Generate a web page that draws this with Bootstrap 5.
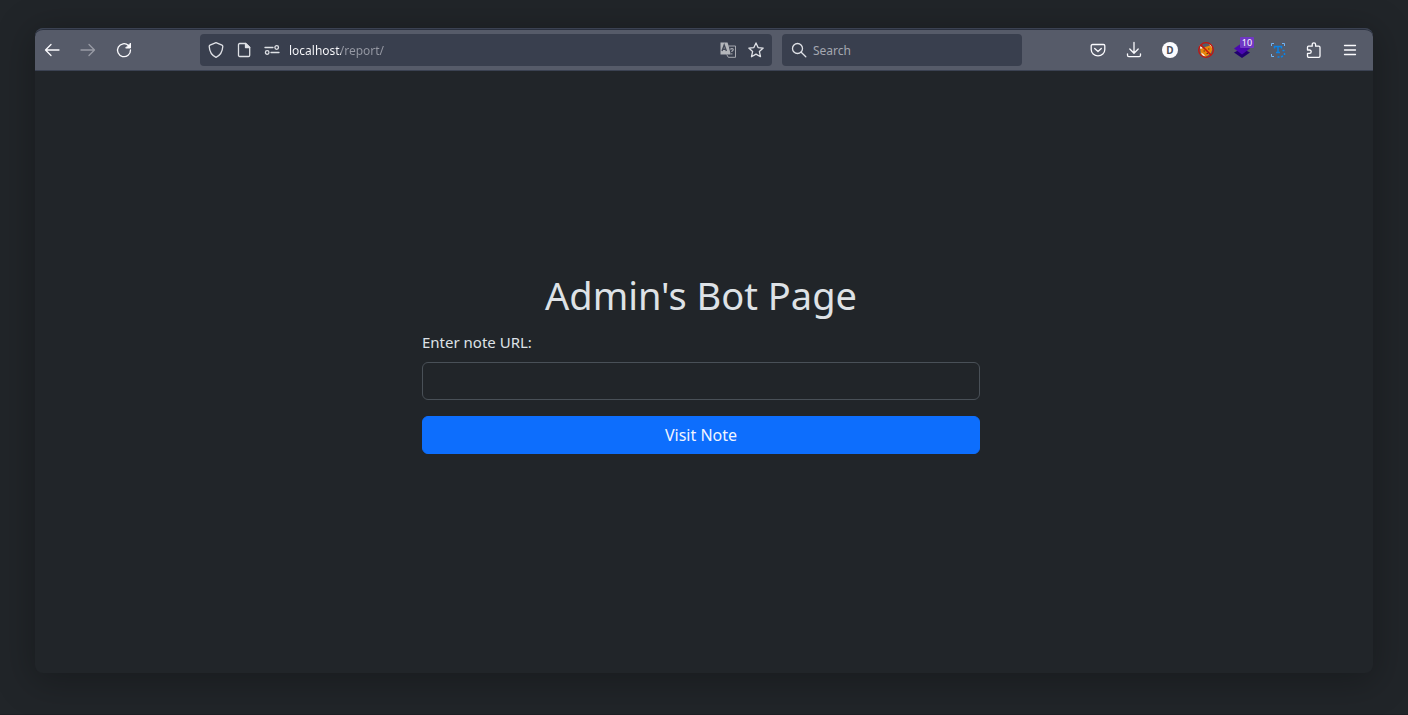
<!DOCTYPE html>
<html lang="en" data-bs-theme="dark">
<head>
<meta charset="utf-8">
<meta name="viewport" content="width=device-width, initial-scale=1">
<title>Admin's Bot Page</title>
<link href="https://cdn.jsdelivr.net/npm/bootstrap@5.3.0/dist/css/bootstrap.min.css" rel="stylesheet">
<style>
  body { font-family: "Noto Sans", sans-serif; background: #212529; color: #dee2e6; }
  .desktop { padding: 28px 35px 41px; border-bottom: 1px solid #1d1f24; }
  .window { background: #212529; border-radius: 8px; box-shadow: 0 6px 36px 4px rgba(0, 0, 0, .25); }
  .toolbar { height: 43px; gap: 2px; padding: 1px 6px 0 0; background: #565b69; color: #fbfbfe;
    border-top: 1px solid #3b4252; border-bottom: 1px solid #3b4252; border-radius: 8px 8px 0 0;
    box-shadow: inset 0 1px #2a303e; }
  .tool { width: 34px; height: 32px; padding: 0; border: 0; background: none; color: inherit;
    display: flex; align-items: center; justify-content: center; flex: none; }
  .tool:disabled { opacity: .4; }
  .tool svg { width: 16px; height: 16px; display: block; overflow: visible; }
  .line { fill: none; stroke: currentColor; stroke-width: 1.3; stroke-linecap: round; stroke-linejoin: round; }
  .spring { flex: 55 1 0; }
  .field { height: 32px; background: #393f4e; border-radius: 4px; color: #dfe1e6; }
  .field .tool { width: 28px; }
  .field input { min-width: 0; flex: 1; border: 0; padding: 2px 0 0; outline: 0; background: none; font-size: 12px; color: #fbfbfe; }
  .field input::placeholder { color: #a4a7b0; opacity: 1; }
  .address { flex: 568 1 0; padding: 0 2px; }
  .field .host-input { margin-left: 3px; background: linear-gradient(90deg, #fbfbfe 52px, #9699a4 52px);
    -webkit-background-clip: text; background-clip: text; -webkit-text-fill-color: transparent; }
  .finder { flex: 0 1 240px; margin-left: 8px; padding-left: 3px; }
  .count { position: absolute; top: 3px; right: 5px; width: 14px; height: 11px; background: #7038c4;
    border-radius: 1px; color: #fff; font-size: 9px; line-height: 11px; text-align: center; }
  .page-main { padding: 0 6px 0 0; }
  .note-form { width: 100%; max-width: 558px; padding-bottom: 16px; }
  .note-form h1 { font-size: 38px; font-weight: 400; line-height: 42px; margin-bottom: 14px; color: #dee2e6; }
  .note-form .form-label { font-size: 15px; line-height: 24px; }
  .form-control { background: #212529; border-color: #495057; }
  .btn-primary { color: #f1f5ff; }
</style>
</head>
<body>
<div class="desktop min-vh-100 d-flex">
  <div class="window flex-grow-1 d-flex flex-column">
    <header class="toolbar d-flex align-items-center">
      <button class="tool" type="button" aria-label="Back"><svg viewBox="0 0 16 16" class="line"><path d="M15 8H1.500M7 2.500 1.500 8 7 13.500"/></svg></button>
      <button class="tool" type="button" aria-label="Forward" disabled><svg viewBox="0 0 16 16" class="line"><path d="M1 8h13.500M9 2.500 14.500 8 9 13.500"/></svg></button>
      <button class="tool" type="button" aria-label="Reload"><svg viewBox="0 0 16 16" class="line"><path d="M12.500 3.500A6.500 6.500 0 1 0 14.500 8"/><path d="M14.500 1.500v4.500H10z" fill="currentColor" stroke-width="1"/></svg></button>
      <div class="spring"></div>
      <div class="field address d-flex align-items-center">
        <button class="tool" type="button" aria-label="Tracking protection"><svg viewBox="0 0 16 16" class="line"><path d="M8 .7 14 3.200c.6.3.8.7.8 1.200C14.500 9.500 12 13.500 8 15.300 4 13.500 1.500 9.500 1.200 4.400c0-.5.2-.9.8-1.200z"/></svg></button>
        <button class="tool" type="button" aria-label="Page information"><svg viewBox="0 0 16 16" class="line"><path d="M3.700 1.500h6l4 4v7.800c0 .7-.5 1.200-1.200 1.200H3.700c-.7 0-1.200-.5-1.200-1.200V2.700c0-.7.5-1.200 1.200-1.200z"/><path d="M9.500 1.500v4h4.200z" fill="currentColor"/></svg></button>
        <button class="tool" type="button" aria-label="Permissions"><svg viewBox="0 0 16 16" class="line"><path d="M1 5.500h8M7 10.500h8"/><circle cx="12.700" cy="5.500" r="1.800"/><circle cx="3.200" cy="10.500" r="1.800"/></svg></button>
        <input class="host-input" type="text" aria-label="Address" value="localhost/report/">
        <button class="tool" type="button" aria-label="Translate"><svg viewBox="0 0 16 16"><path d="M.5.500h7l1.200 3.500 2 8.500H.5z" fill="#b4b6bb"/><path d="M8.500 4h7v11.300H8.300l-1.600-2.800" fill="none" stroke="#a7a9b0"/><path d="m2 9 2.200-6 2.200 6M3 7.200h2.600" fill="none" stroke="#454a58" stroke-width="1.400"/><path d="M10.500 7.500c.4-1.300 3-1.200 2.700.3-.2.900-1.400.9-1.400 2.200m0 1.300v1.200" fill="none" stroke="#a7a9b0" stroke-width="1.200"/></svg></button>
        <button class="tool" type="button" aria-label="Bookmark"><svg viewBox="0 0 16 16" class="line"><path d="m8 .9 2.100 4.700 5.100.5-3.800 3.500 1.100 5.100L8 12.100l-4.500 2.600 1.100-5.100L.8 6.100l5.100-.5z"/></svg></button>
      </div>
      <div class="field finder d-flex align-items-center">
        <label class="tool" for="finder"><svg viewBox="0 0 16 16" class="line"><circle cx="6.500" cy="6.500" r="5"/><path d="m10.200 10.200 4.600 4.600"/></svg></label>
        <input id="finder" type="search" placeholder="Search" aria-label="Search">
      </div>
      <div class="spring"></div>
      <button class="tool" type="button" aria-label="Save to Pocket"><svg viewBox="0 0 16 16" class="line"><path d="M2.500 2.500h11c.8 0 1.300.5 1.300 1.300V7.500c0 3.700-3 6.300-6.800 6.300S1.200 11.200 1.200 7.500V3.800c0-.8.5-1.300 1.300-1.300zM4.700 6.500 8 9.500l3.300-3"/></svg></button>
      <button class="tool" type="button" aria-label="Downloads"><svg viewBox="0 0 16 16" class="line"><path d="M8 .5v10.500M3.800 7 8 11.200 12.200 7M1.500 11.800v1.500c0 .8.500 1.300 1.300 1.300h10.400c.8 0 1.300-.5 1.300-1.300v-1.500"/></svg></button>
      <button class="tool" type="button" aria-label="Account"><svg viewBox="0 0 16 16"><circle cx="8" cy="8" r="8" fill="#fbfbfe"/><text x="8" y="11.500" text-anchor="middle" font-size="10" font-weight="700" fill="#4a4f5c">D</text></svg></button>
      <button class="tool" type="button" aria-label="Proxy off"><svg viewBox="0 0 16 16"><path d="m2 4 3 2.500 2-1.500L10.500 4l3-1.500 1 4.500-1.500 4-3 2.500-3 1.500-4-2.500L2.500 9z" fill="#e8870c"/><path d="m1.500 3.500 1 3.500L5 6zM11 2l2.500 1 .7 3zM3 10.500l2.500 1.500 2 2.500-3-1z" fill="#f4ede6"/><path d="M5.500 9H7M10 7h1.500M8.500 11.500H10" stroke="#6b3a12"/><circle cx="8" cy="8" r="7.300" fill="none" stroke="#c4140e" stroke-width="1.300"/><path d="m3 3 10 10" stroke="#c4140e" stroke-width="1.600"/></svg></button>
      <button class="tool position-relative" type="button" aria-label="Layers"><svg viewBox="0 0 16 16"><path d="m0 10.500 8-4 8 4L8 16z" fill="#21006f"/><path d="m0 6.500 8-5.500 8 5.500-8 6z" fill="#4a08b0"/></svg><span class="count">10</span></button>
      <button class="tool" type="button" aria-label="Text capture"><svg viewBox="0 0 16 16" fill="none"><path d="M1.500 4V1.500H4M12 1.500h2.500V4M1.500 12v2.500H4" stroke="#70b4f5"/><path d="M4.500 6.500v-2h7v2M8 4.500v6M6 10.500h4" stroke="#0b83e6" stroke-width="1.500"/><path d="M12.500 8.500h2M14.500 11v2M7.500 15h2M11 15l2-1" stroke="#0b83e6" stroke-width="1.500"/></svg></button>
      <button class="tool" type="button" aria-label="Extensions"><svg viewBox="0 0 16 16" class="line"><path d="M2.500 4.200h3.700V2.500a1.700 1.700 0 0 1 3.400 0v1.700h3.200c.7 0 1.200.5 1.200 1.200v8.700c0 .7-.5 1.200-1.200 1.200H2.700c-.7 0-1.200-.5-1.200-1.200v-2.700h2a1.700 1.700 0 0 0 0-3.400h-2V5.200c0-.6.4-1 1-1z"/></svg></button>
      <button class="tool" type="button" aria-label="Menu"><svg viewBox="0 0 16 16" class="line"><path d="M2.500 3.500h11M2.500 8h11M2.500 12.500h11"/></svg></button>
    </header>
    <main class="page-main flex-grow-1 d-flex align-items-center justify-content-center">
      <form class="note-form">
        <h1 class="text-center">Admin's Bot Page</h1>
        <div class="mb-3">
          <label class="form-label" for="url">Enter note URL:</label>
          <input class="form-control" id="url" type="text">
        </div>
        <button class="btn btn-primary w-100" type="button">Visit Note</button>
      </form>
    </main>
  </div>
</div>
<script src="https://cdn.jsdelivr.net/npm/bootstrap@5.3.0/dist/js/bootstrap.bundle.min.js"></script>
</body>
</html>
